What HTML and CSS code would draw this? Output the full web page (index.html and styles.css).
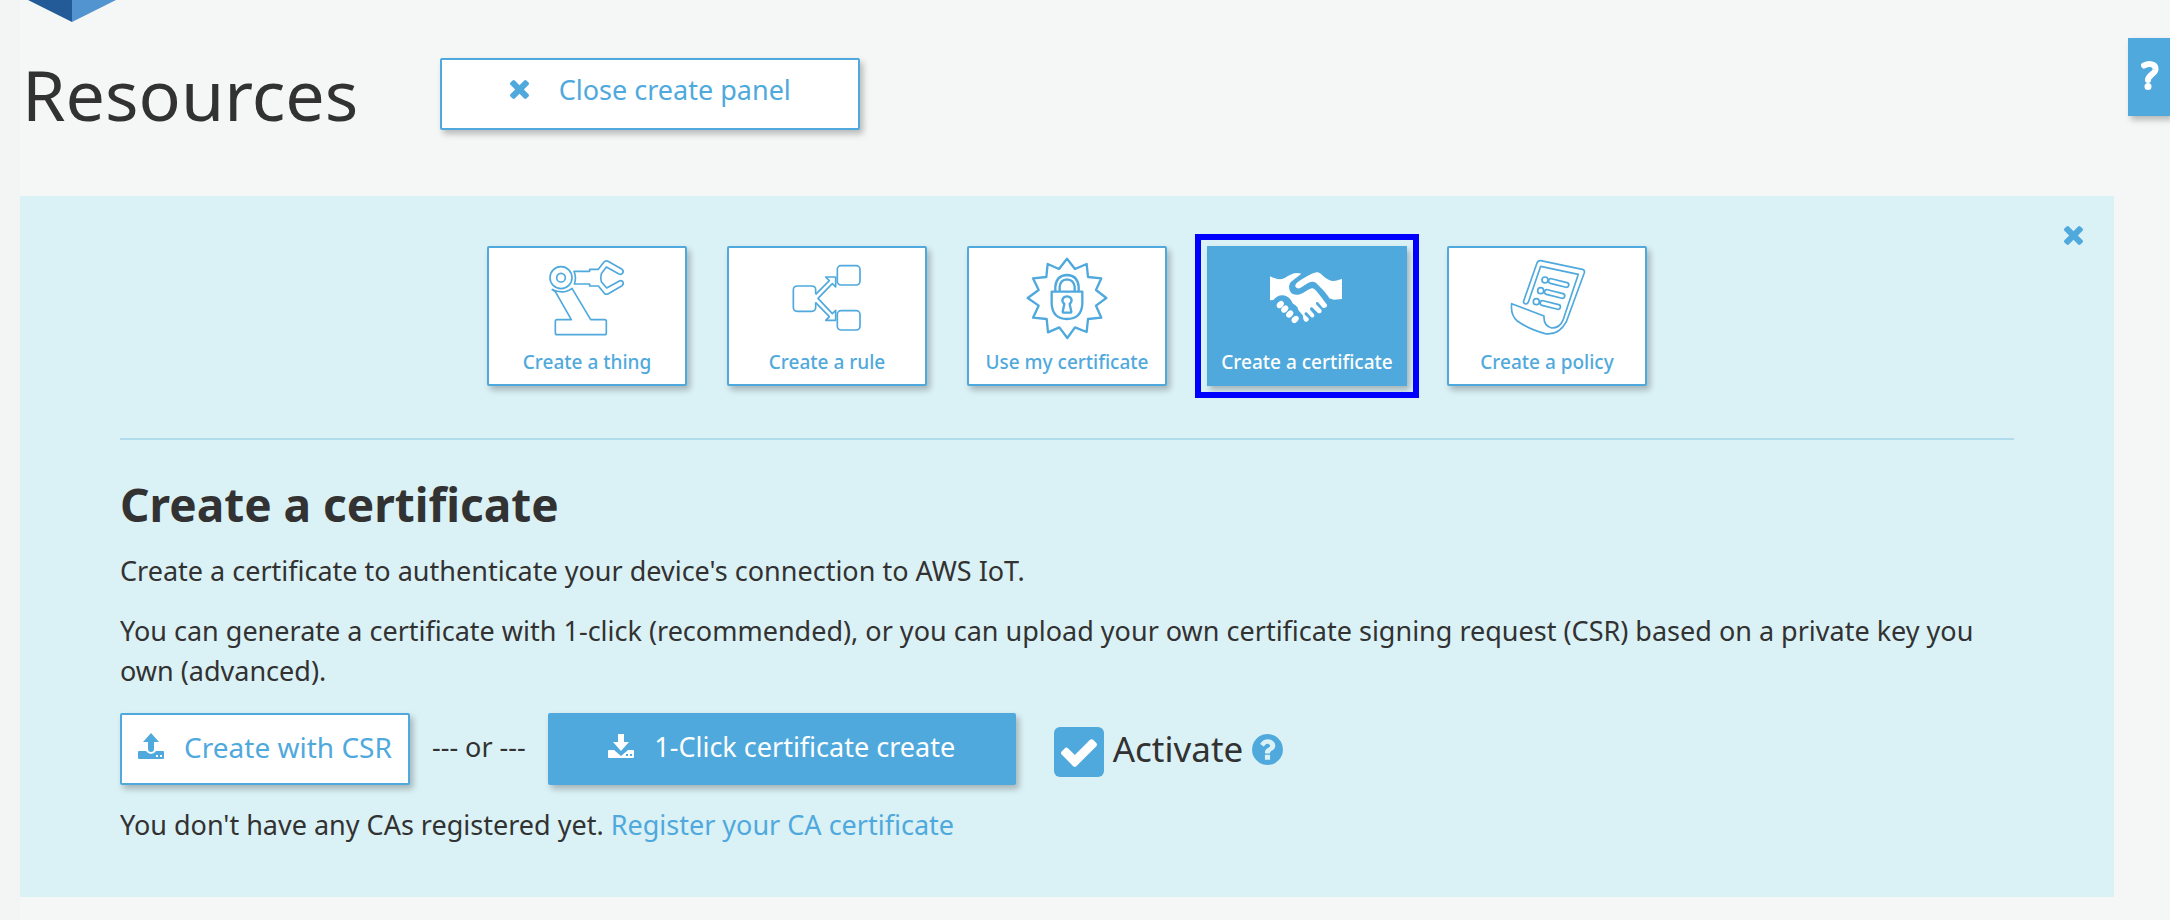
FILE: index.html
```html
<!DOCTYPE html>
<html lang="en">
<head>
<meta charset="utf-8">
<title>Resources</title>
<link rel="stylesheet" href="styles.css">
</head>
<body>
<svg class="sprite" aria-hidden="true">
  <symbol id="times" viewBox="302 366 1188 1188"><path d="M1490 1322q0 40-28 68l-136 136q-28 28-68 28t-68-28l-294-294-294 294q-28 28-68 28t-68-28l-136-136q-28-28-28-68t28-68l294-294-294-294q-28-28-28-68t28-68l136-136q28-28 68-28t68 28l294 294 294-294q28-28 68-28t68 28l136 136q28 28 28 68t-28 68l-294 294 294 294q28 28 28 68z"/></symbol>
</svg>
<svg class="logo" viewBox="0 0 88 22" aria-hidden="true"><path class="logo-dark" d="M0 0H44V22Z"/><path class="logo-light" d="M88 0H44V22Z"/></svg>
<button class="help-tab" type="button" aria-label="Help">
  <svg viewBox="0 0 18 29" aria-hidden="true"><path d="M3 4.500C8 2 15 2.500 14.500 8.500C14 13 7 14 7 19"/><circle cx="7" cy="25.500" r="3.500"/></svg>
</button>
<main class="page">
  <header class="page-header">
    <h1>Resources</h1>
    <button class="button button-close" type="button"><svg class="icon-times" aria-hidden="true"><use href="#times"/></svg>Close create panel</button>
  </header>
  <section class="panel">
    <button class="panel-close" type="button" aria-label="Close"><svg class="icon-times" aria-hidden="true"><use href="#times"/></svg></button>
    <nav class="tiles">
      <button class="tile" type="button">
        <svg class="line" viewBox="204 60 240 252" aria-hidden="true">
          <circle cx="246" cy="128" r="33"/><circle cx="246" cy="128" r="13"/>
          <path d="M285 109H332V103H358L375 81Q380 75 387 79L429 103Q435 108 431 114Q427 120 420 117L382 96L367 116Q364 127 367 140L383 159L421 138Q428 135 432 141Q435 147 429 152L388 176Q381 180 376 175L358 153H332V147H286Q293 128 285 109Z"/>
          <path d="M218 163L229 170L277 254H234Q229 254 229 259V293Q229 299 234 299H377Q382 299 382 293V259Q382 254 377 254H335L279 160Q254 180 218 163"/>
        </svg>
        <span>Create a thing</span>
      </button>
      <button class="tile" type="button">
        <svg class="line" viewBox="204 60 240 252" aria-hidden="true">
          <rect x="355" y="92" width="68" height="58" rx="11"/><rect x="355" y="227" width="68" height="58" rx="11"/>
          <path d="M290 178V164Q290 153 278 153H235Q223 153 223 165V217Q223 229 235 229H278Q290 229 290 217V202"/>
          <path d="M290 178L331 137L320 126H350V156L340 146L297 190L340 236L350 226V256H320L331 245L290 203"/>
        </svg>
        <span>Create a rule</span>
      </button>
      <button class="tile" type="button">
        <svg class="line bold" viewBox="204 60 240 252" aria-hidden="true">
          <path d="M324 71L348 102L383 87L387 126L427 130L411 165L442 189L411 212L427 248L387 252L383 291L348 277L325 309L301 277L267 292L263 252L222 248L239 212L206 189L239 165L222 130L262 126L266 87L300 102Z"/>
          <path d="M289 170H278V207Q281 252 324 252Q367 252 370 207V170H359V155Q356 121 324 120Q292 121 289 155ZM289 170H359M302 170V155Q304 134 324 133Q344 134 347 155V170"/>
          <path d="M316 207Q308 200 311 192Q315 184 324 184Q333 184 337 192Q340 200 332 207L337 230Q337 233 333 233H315Q311 233 311 230Z"/>
        </svg>
        <span>Use my certificate</span>
      </button>
      <button class="tile tile-active" type="button" aria-pressed="true">
        <svg class="solid" viewBox="249 90 240 252" aria-hidden="true">
          <path d="M258 154C275 162 288 166 302 159C320 147 335 140 352 146C340 156 325 166 320 172C312 182 315 200 325 206C335 212 348 209 358 203C370 196 380 190 385 190C392 191 400 200 428 238C432 244 424 252 416 248L402 232C396 229 394 236 398 240L412 254C416 262 408 268 401 263L386 248C380 244 376 250 379 255L390 268C394 276 386 280 381 276L368 262C362 260 360 266 363 270L374 280C376 286 370 292 364 290C358 286 357 280 357 272C350 262 340 255 341 247C336 243 333 238 327 236C320 222 318 220 310 215C295 207 280 210 268 225L258 226Z"/>
          <path d="M474 162V222L449 224L436 220C428 205 410 188 400 178C395 170 385 168 372 174L350 188C340 194 332 186 334 180C336 174 345 168 355 162C370 154 385 144 397 142C405 141 412 148 420 155C430 162 438 168 448 168C458 168 465 164 474 162Z"/>
          <g transform="rotate(-45 310 260)"><ellipse cx="310" cy="230" rx="12" ry="9"/><ellipse cx="310" cy="249" rx="12" ry="9"/><ellipse cx="310" cy="270" rx="12" ry="9"/><ellipse cx="310" cy="293" rx="12" ry="9"/></g>
        </svg>
        <span>Create a certificate</span>
      </button>
      <button class="tile" type="button">
        <svg class="line" viewBox="204 60 240 252" aria-hidden="true">
          <path d="M269 199L305 94L418 118L373 253Q363 279 338 279Q313 272 315 243L218 206Q214 240 235 258Q265 280 318 296Q360 302 382 260L436 113Q438 105 430 103L305 77Q297 76 294 84L254 198Q252 206 260 207Q266 208 269 199Z"/>
          <circle cx="318" cy="135" r="9"/><circle cx="305" cy="167" r="9"/><circle cx="292" cy="200" r="9"/>
          <rect x="328" y="137" width="62" height="14" rx="7" transform="rotate(14 359 144)"/><rect x="316" y="170" width="62" height="14" rx="7" transform="rotate(14 347 177)"/><rect x="303" y="203" width="62" height="14" rx="7" transform="rotate(14 334 210)"/>
        </svg>
        <span>Create a policy</span>
      </button>
    </nav>
    <hr>
    <h2>Create a certificate</h2>
    <p>Create a certificate to authenticate your device's connection to AWS IoT.</p>
    <p>You can generate a certificate with 1-click (recommended), or you can upload your own certificate signing request (CSR) based on a private key you own (advanced).</p>
    <div class="actions">
      <button class="button button-csr" type="button"><svg class="icon-load" viewBox="0 0 26 26" aria-hidden="true"><path d="M13 -1L21 8H16V15Q16 18 13 18Q10 18 10 15V8H5ZM1 17H8Q10 20 13 20Q16 20 18 17H25Q26 17 26 18V24Q26 25 25 25H1Q0 25 0 24V18Q0 17 1 17ZM18 21V23H20V21ZM22 21V23H24V21Z"/></svg>Create with CSR</button>
      <span class="or">--- or ---</span>
      <button class="button button-primary" type="button"><svg class="icon-load" viewBox="0 0 26 26" aria-hidden="true"><path d="M10 0H16V8H21L13 17L5 8H10ZM1 16H6L13 22L20 16H25Q26 16 26 17V23Q26 24 25 24H1Q0 24 0 23V17Q0 16 1 16ZM18 20V22H20V20ZM22 20V22H24V20Z"/></svg>1-Click certificate create</button>
      <div class="activate">
        <span class="check"><input id="activate" type="checkbox" checked><svg viewBox="121 334 1550 1188" aria-hidden="true"><path d="M1671 566q0 40-28 68l-724 724-136 136q-28 28-68 28t-68-28l-136-136-362-362q-28-28-28-68t28-68l136-136q28-28 68-28t68 28l294 295 656-657q28-28 68-28t68 28l136 136q28 28 28 68z"/></svg></span>
        <label for="activate">Activate</label>
        <svg class="icon-help" viewBox="128 128 1536 1536" aria-hidden="true"><path d="M1024 1376v-192q0-14-9-23t-23-9h-192q-14 0-23 9t-9 23v192q0 14 9 23t23 9h192q14 0 23-9t9-23zm256-672q0-88-55.500-163t-138.500-116-170-41q-243 0-371 213-15 24 8 42l132 100q7 6 19 6 16 0 25-12 53-68 86-92 34-24 86-24 48 0 85.500 26t37.500 59q0 38-20 61t-68 45q-63 28-115.500 86.500t-52.500 125.500v36q0 14 9 23t23 9h192q14 0 23-9t9-23q0-19 21.500-49.500t54.500-49.500q32-18 49-28.500t46-35 44.500-48 28-60.500 12.500-81zm384 192q0 209-103 385.500t-279.500 279.500-385.500 103-385.500-103-279.500-279.500-103-385.500 103-385.500 279.500-279.500 385.500-103 385.500 103 279.500 279.500 103 385.500z"/></svg>
      </div>
    </div>
    <p>You don't have any CAs registered yet. <a href="#">Register your CA certificate</a></p>
  </section>
</main>
</body>
</html>
```
FILE: styles.css
```css
:root {
  --blue: #4fa9dd;
  --ink: #323232;
  --panel: #daf1f5;
  --shadow: 3px 4px 6px rgba(0, 0, 0, 0.25);
}

* { box-sizing: border-box; }

body {
  margin: 0;
  min-height: 100vh;
  background: #f5f7f6;
  border-left: 20px solid #f3f5f4;
  color: var(--ink);
  font: 27px/40px "Noto Sans", sans-serif;
}

button {
  font: inherit;
  cursor: pointer;
}

svg { display: block; flex: none; }

.sprite { display: none; }

/* Logo and help tab hang over the page edges */
.logo {
  position: absolute;
  top: 0;
  left: 28px;
  width: 88px;
}
.logo-dark { fill: #225b98; }
.logo-light { fill: #5294d0; }

.help-tab {
  position: absolute;
  top: 38px;
  right: 0;
  width: 42px;
  height: 78px;
  padding: 0 0 0 13px;
  border: 0;
  background: var(--blue);
  box-shadow: var(--shadow);
}
.help-tab svg { width: 18px; height: 29px; margin-top: -4px; }
.help-tab path { fill: none; stroke: #fff; stroke-width: 6; stroke-linecap: round; }
.help-tab circle { fill: #fff; }

.page { padding-right: 56px; }

.page-header {
  display: flex;
  align-items: center;
  gap: 82px;
  padding: 46px 0 54px 2px;
}

h1 {
  margin: 0;
  font-size: 70px;
  font-weight: 400;
  line-height: 96px;
}

.button {
  display: flex;
  justify-content: center;
  gap: 20px;
  height: 72px;
  padding: 12px 8px 0;
  border: 2px solid var(--blue);
  border-radius: 2px;
  background: #fff;
  color: var(--blue);
  box-shadow: var(--shadow);
  white-space: nowrap;
}

.icon-times { width: 19px; height: 19px; fill: currentColor; }
.icon-load { width: 26px; height: 26px; fill: currentColor; margin-top: 7px; overflow: visible; }

.button-close { width: 420px; gap: 30px; padding-top: 10px; }
.button-close .icon-times { margin-top: 10px; }
.button-csr { width: 290px; font-size: 28px; }
.button-primary { width: 468px; background: var(--blue); color: #fff; }

.panel {
  position: relative;
  padding: 50px 100px 52px;
  background: var(--panel);
}

.panel-close {
  position: absolute;
  top: 30px;
  right: 31px;
  padding: 0;
  border: 0;
  background: none;
  color: var(--blue);
}

.tiles {
  display: flex;
  justify-content: center;
  gap: 40px;
}

.tile {
  display: flex;
  flex-direction: column;
  align-items: center;
  gap: 9px;
  width: 200px;
  height: 140px;
  padding: 7px 0 0;
  border: 2px solid var(--blue);
  border-radius: 2px;
  background: #fff;
  color: var(--blue);
  box-shadow: var(--shadow);
  font-size: 19px;
  font-weight: 500;
  line-height: 28px;
  white-space: nowrap;
}
.tile svg { width: 80px; height: 84px; overflow: visible; }
.tile-active {
  border-radius: 0;
  background: var(--blue);
  color: #fff;
  outline: 6px solid #00f;
  outline-offset: 6px;
}

.line { fill: none; stroke: var(--blue); stroke-width: 5; stroke-linejoin: round; }
.bold { stroke-width: 7; }
.solid { fill: #fff; }

hr {
  height: 2px;
  margin: 52px 0 32px;
  border: 0;
  background: #b0dcee;
}

h2 {
  margin: 0 0 15px;
  font-size: 46px;
  line-height: 64px;
}

p { margin: 0 0 20px; }

.actions {
  display: flex;
  gap: 22px;
  margin-bottom: 20px;
  padding-top: 2px;
}
.actions + p { margin: 0; }
.or { padding-top: 14px; }

.activate {
  display: flex;
  align-items: center;
  gap: 9px;
  margin-left: 16px;
  font-size: 35px;
}

.check {
  position: relative;
  width: 50px;
  height: 50px;
  margin-top: 6px;
}
.check input {
  display: block;
  appearance: none;
  width: 50px;
  height: 50px;
  margin: 0;
  border-radius: 6px;
  background: var(--blue);
}
.check svg {
  position: absolute;
  top: 12px;
  left: 7px;
  width: 36px;
  height: 28px;
  fill: #fff;
  pointer-events: none;
}
.check input:not(:checked) + svg { display: none; }

.icon-help { width: 31px; height: 31px; fill: var(--blue); }

a { color: var(--blue); text-decoration: none; }
```
